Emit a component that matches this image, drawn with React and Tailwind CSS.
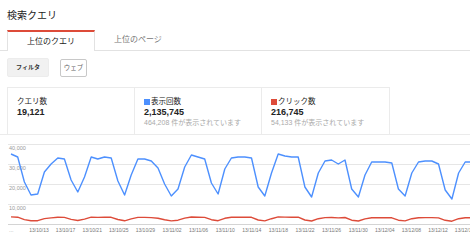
import React from "react";

const FONT = "font-['Liberation_Sans','Noto_Sans_CJK_JP',sans-serif]";

// impressions per day, traced as page y (0 = 224, 2px per 1000)
const blue = [
  154, 157, 182, 195, 194, 172, 164, 158, 159, 180, 192, 177, 157, 159, 157, 158,
  181, 195, 175, 159, 159, 161, 168, 184, 196, 189, 167, 155, 157, 159, 183, 194,
  169, 158, 157, 157, 158, 187, 196, 173, 154, 156, 157, 157, 187, 197, 173, 161,
  160, 164, 160, 189, 197, 175, 162, 162, 162, 163, 189, 196, 173, 162, 161, 161,
  164, 190, 199, 173, 162, 162,
];
const red = blue.map((y) => Math.round((217 + ((y - 155) * 4) / 42) * 10) / 10);

const dates = [
  "13/10/13", "13/10/17", "13/10/21", "13/10/25", "13/10/29", "13/11/02",
  "13/11/06", "13/11/10", "13/11/14", "13/11/18", "13/11/22", "13/11/26",
  "13/11/30", "13/12/04", "13/12/08", "13/12/12", "13/12/16",
];

const toPoints = (arr) => arr.map((y, i) => `${(11 + i * 6.68).toFixed(1)},${y}`).join(" ");

function Chart() {
  const grid = [
    { y: 144, label: "40,000" },
    { y: 164, label: "30,000" },
    { y: 184, label: "20,000" },
    { y: 204, label: "10,000" },
  ];
  return (
    <svg width="470" height="108" viewBox="0 135 470 108" className="block">
      {grid.map((g) => (
        <g key={g.y}>
          <line x1="8" x2="470" y1={g.y + 0.5} y2={g.y + 0.5} stroke="#e6e6e6" />
          <text x="9" y={g.y + 6} fontSize="5.5" fill="#999">{g.label}</text>
        </g>
      ))}
      <line x1="8" x2="470" y1="224.5" y2="224.5" stroke="#d4d4d4" />
      <polyline points={toPoints(blue)} fill="none" stroke="#4d90fe" strokeWidth="1.4" strokeLinejoin="round" />
      <polyline points={toPoints(red)} fill="none" stroke="#dd4b39" strokeWidth="1.4" strokeLinejoin="round" />
      <text x="9" y="232" fontSize="5.5" fill="#aaa">...</text>
      {dates.map((d, i) => (
        <text key={d} x={39 + i * 26.6} y="232" fontSize="5" fill="#777" textAnchor="middle">{d}</text>
      ))}
    </svg>
  );
}

function Stat({ color, label, value, sub, last }) {
  return (
    <div className={`w-[128px] pl-[9px] pt-[9px] ${last ? "" : "border-r border-[#ebebeb]"}`}>
      <div className="flex items-center gap-[1px] text-[7.5px] leading-[9px] text-[#222]">
        {color && <span className={`inline-block w-[6px] h-[6px] ${color}`} />}
        {label}
      </div>
      <div className="text-[9px] leading-[12px] font-bold text-[#222]">{value}</div>
      {sub && <div className="text-[7px] leading-[10px] text-[#aaa]">{sub}</div>}
    </div>
  );
}

export default function App() {
  return (
    <div className={`w-[470px] h-[243px] overflow-hidden bg-white ${FONT}`}>
      <h1 className="pl-[7px] pt-[9px] text-[10px] leading-[14px] text-[#222]">検索クエリ</h1>

      <div className="mt-[7px] flex items-end pl-[7px] border-b border-[#e2e2e2]">
        <div className="-mb-px h-[21px] px-[19px] flex items-center bg-white border-t-2 border-t-[#dd4b39] border-x border-x-[#e2e2e2] text-[8px] text-[#222]">
          上位のクエリ
        </div>
        <div className="h-[20px] px-[19px] flex items-center text-[8px] text-[#777]">
          上位のページ
        </div>
      </div>

      <div className="mt-[7px] pl-[7px] flex items-center gap-[11px]">
        <div className="w-[42px] h-[19px] flex items-center justify-center bg-[#f1f1f1] border border-[#ececec] rounded-[2px] text-[6px] font-bold text-[#333]">
          フィルタ
        </div>
        <div className="w-[27px] h-[18px] flex items-center justify-center bg-white border border-[#c8c8c8] rounded-[2px] text-[6.5px] text-[#666]">
          ウェブ
        </div>
      </div>

      <div className="mt-[10px] border-b border-[#ebebeb]">
        <div className="ml-[7px] w-[383px] h-[47px] flex border-t border-x border-[#ebebeb]">
          <Stat label="クエリ数" value="19,121" />
          <Stat color="bg-[#4d90fe]" label="表示回数" value="2,135,745" sub="464,208 件が表示されています" />
          <Stat color="bg-[#dd4b39]" label="クリック数" value="216,745" sub="54,133 件が表示されています" last />
        </div>
      </div>

      <Chart />
    </div>
  );
}
